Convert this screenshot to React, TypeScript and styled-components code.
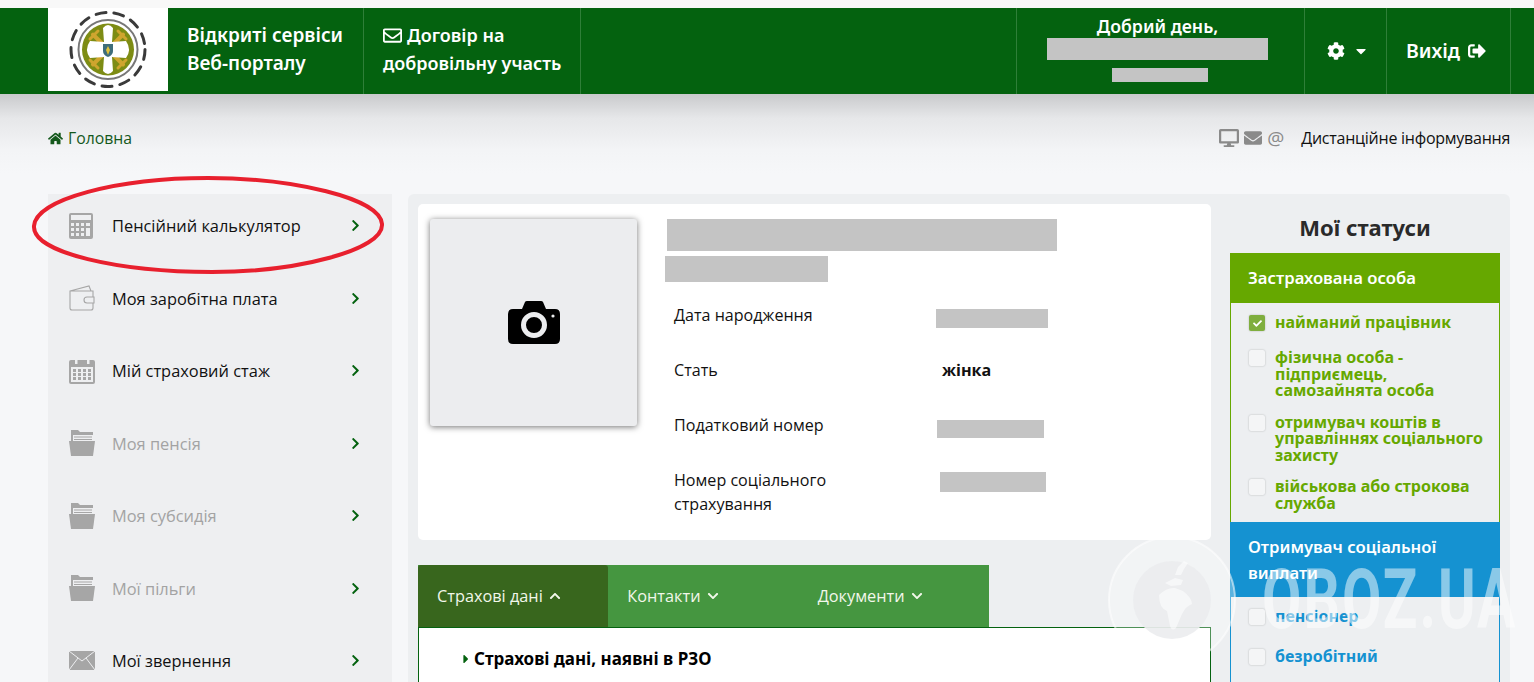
import React, { FC } from 'react'
import styled, { createGlobalStyle } from 'styled-components'
import {
  FaCaretDown,
  FaCaretRight,
  FaCheck,
  FaChevronDown,
  FaChevronRight,
  FaChevronUp,
  FaCog,
  FaDesktop,
  FaEnvelope,
  FaHome,
  FaRegEnvelope,
  FaSignOutAlt,
} from 'react-icons/fa'

const GREEN = '#04620f'
const STATUS_GREEN = '#66a800'
const STATUS_BLUE = '#1592d1'
const PANEL = '#edeff1'
const ICON_GREY = '#a6a6a6'

const GlobalStyle = createGlobalStyle`
  html, body { margin: 0; height: 682px; overflow: hidden; background: #f6f7f9; }
  body { font-family: "Open Sans", "Noto Sans", sans-serif; font-size: 16px; color: #111; }
  * { box-sizing: border-box; }
`

const Page = styled.div`
  position: relative;
  height: 682px;
  overflow: hidden;
  padding-top: 8px;
  background: #f8f8f8;
`

const Header = styled.header`
  display: flex;
  height: 86px;
  padding-left: 48px;
  background: ${GREEN};
  color: #fff;
  font-family: "Noto Sans", sans-serif;
  font-weight: 600;
  font-size: 18px;
  line-height: 28px;
`

const LogoBox = styled.div`
  display: flex;
  align-items: center;
  justify-content: center;
  width: 120px;
  height: 83px;
  background: #fff;
`

const Cell = styled.div<{ $w: number; $size?: number; $pad?: number }>`
  display: flex;
  flex-direction: column;
  justify-content: center;
  width: ${(p) => p.$w}px;
  padding: 0 0 4px ${(p) => p.$pad ?? 19}px;
  border-right: 1px solid #2f7f38;
  font-size: ${(p) => p.$size ?? 18}px;
  white-space: nowrap;
`

const CenterCell = styled(Cell)`
  align-items: center;
  padding: 0 0 0 ${(p) => p.$pad ?? 0}px;
`

const ExitCell = styled(CenterCell)`
  padding-right: 5px;
`

const HeaderSpacer = styled.div`
  flex: 1;
  border-right: 1px solid #2f7f38;
`

const HeaderEnd = styled.div`
  width: 23px;
`

const Row = styled.div<{ $gap?: number }>`
  display: flex;
  align-items: center;
  gap: ${(p) => p.$gap ?? 5}px;
  white-space: nowrap;
`

const Greeting = styled(CenterCell)`
  justify-content: flex-start;
  padding: 6px 6px 0 0;
  line-height: 24px;
`

const HeaderBlock = styled.div<{ $w: number; $h: number; $mt: number; $x?: number }>`
  width: ${(p) => p.$w}px;
  height: ${(p) => p.$h}px;
  margin-top: ${(p) => p.$mt}px;
  margin-left: ${(p) => p.$x ?? 0}px;
  background: #c4c4c4;
`

const Content = styled.div`
  height: 588px;
  padding: 0 24px 0 48px;
  background: linear-gradient(#c9cacc 0, #e6e7e9 24px, #f3f4f6 56px, #f6f7f9 80px);
`

const Crumbs = styled.div`
  display: flex;
  align-items: center;
  justify-content: space-between;
  height: 100px;
  padding-bottom: 12px;
`

const HomeLink = styled.a`
  display: flex;
  align-items: center;
  gap: 5px;
  color: #14581c;
  font-size: 15.8px;
`

const Remote = styled.div`
  display: flex;
  align-items: center;
  gap: 5px;
  color: #8a8a8a;
`

const RemoteAt = styled.span`
  font-size: 19px;
  line-height: 20px;
`

const RemoteLabel = styled.span`
  margin-left: 12px;
  color: #111;
  letter-spacing: -0.25px;
`

const Columns = styled.div`
  display: grid;
  grid-template-columns: 344px 1102px;
  gap: 16px;
`

const Sidebar = styled.nav`
  display: flex;
  flex-direction: column;
  gap: 8.5px;
  height: 560px;
  background: #eeeff1;
`

const SideItem = styled.a<{ $off?: boolean }>`
  display: grid;
  grid-template-columns: 24px 1fr 11px;
  align-items: center;
  column-gap: 19px;
  flex: 0 0 64px;
  padding: 0 31px 0.8px 21px;
  color: ${(p) => (p.$off ? '#a3a3a3' : '#111')};
  font-size: 16.4px;
`

const Arrow = styled(FaChevronRight)`
  width: 11px;
  height: 13px;
  color: ${GREEN};
`

const Panel = styled.main`
  display: grid;
  grid-template-columns: 793px 270px;
  column-gap: 19px;
  height: 560px;
  padding: 10px;
  background: ${PANEL};
  border-radius: 6px;
`

const Card = styled.section`
  display: grid;
  grid-template-columns: 207px 1fr;
  column-gap: 30px;
  height: 336px;
  padding: 15px 12px;
  background: #fff;
  border-radius: 5px;
`

const Photo = styled.div`
  display: flex;
  align-items: center;
  justify-content: center;
  height: 207px;
  background: #ecedef;
  border-radius: 3px;
  box-shadow: 0 1px 6px rgba(0, 0, 0, 0.55);
`

const Redacted = styled.div<{ $w: number; $h: number; $x?: number; $y?: number }>`
  width: ${(p) => p.$w}px;
  height: ${(p) => p.$h}px;
  margin: ${(p) => p.$y ?? 0}px 0 0 ${(p) => p.$x ?? 0}px;
  background: #c4c4c4;
`

const Person = styled.div`
  display: flex;
  flex-direction: column;
  gap: 5px;
`

const Facts = styled.dl`
  display: grid;
  grid-template-columns: 262px 1fr;
  grid-auto-rows: 55px;
  align-items: start;
  width: 420px;
  margin: 16px 0 0 7px;
  font-size: 16.1px;
  line-height: 24px;
`

const FactName = styled.dt`
  margin: 0;
`

const FactValue = styled.dd`
  margin: 0 0 0 6px;
  font-weight: 700;
`

const Tabs = styled.div`
  display: flex;
  width: 571px;
  height: 62px;
  margin-top: 25px;
  background: #459640;
`

const Tab = styled.div<{ $active?: boolean }>`
  display: flex;
  align-items: center;
  gap: 6px;
  width: 190.33px;
  padding-left: 19px;
  background: ${(p) => (p.$active ? '#38661d' : 'transparent')};
  border-radius: 3px 3px 0 0;
  color: #f2f7ea;
  font-size: 16.3px;
`

const TabChevron = styled.span`
  display: flex;
  font-size: 12px;
`

const TabBody = styled.div`
  height: 200px;
  padding: 18px 0 0 40px;
  background: #fff;
  border: 1px solid ${GREEN};
`

const DataTitle = styled.div`
  display: flex;
  align-items: center;
  gap: 2px;
  font-family: "Noto Sans", sans-serif;
  font-weight: 700;
  font-size: 17px;
  line-height: 26px;
  color: #000;
  svg { color: ${GREEN}; font-size: 14px; margin-right: -1px; }
`

const Statuses = styled.aside`
  display: flex;
  flex-direction: column;
`

const StatusesTitle = styled.h2`
  height: 49px;
  margin: 0;
  font-family: "Noto Sans", sans-serif;
  font-size: 22px;
  font-weight: 700;
  line-height: 47px;
  text-align: center;
  color: #2a2a2a;
`

const StatusHead = styled.div<{ $color: string }>`
  padding: 12px 18px 12px;
  background: ${(p) => p.$color};
  color: #fff;
  font-family: "Noto Sans", sans-serif;
  font-weight: 600;
  font-size: 16.7px;
  line-height: 26px;
`

const BlueHead = styled(StatusHead)`
  padding-bottom: 11px;
`

const StatusBody = styled.div<{ $color: string; $gap: number }>`
  display: flex;
  flex-direction: column;
  gap: ${(p) => p.$gap}px;
  padding: 11px 10px 11px 18px;
  border: solid ${(p) => p.$color};
  border-width: 0 1px;
  color: ${(p) => p.$color};
`

const BlueBody = styled(StatusBody)`
  flex: 1;
`

const StatusItem = styled.label<{ $extra?: boolean }>`
  display: grid;
  grid-template-columns: 16px 1fr;
  column-gap: 10px;
  margin-bottom: ${(p) => (p.$extra ? 3 : 0)}px;
  font-family: "Noto Sans", sans-serif;
  font-weight: 700;
  font-size: 16px;
  line-height: 16.5px;
`

const Check = styled.span<{ $on?: boolean }>`
  display: flex;
  align-items: center;
  justify-content: center;
  width: 16px;
  height: 16px;
  margin-top: 1px;
  border-radius: 2px;
  background: ${(p) => (p.$on ? '#7fae3e' : '#f4f5f6')};
  box-shadow: 0 0 2px rgba(0, 0, 0, 0.25);
  color: #fff;
  font-size: 9px;
`

const Ellipse = styled.svg`
  position: absolute;
  left: 28px;
  top: 173px;
  pointer-events: none;
`

const Watermark = styled.div`
  position: absolute;
  left: 1107px;
  top: 535px;
  display: flex;
  align-items: center;
  pointer-events: none;
  color: rgba(255, 255, 255, 0.5);
`

const WatermarkText = styled.span`
  margin-left: 25px;
  font-family: "Roboto", sans-serif;
  font-weight: 700;
  font-size: 84px;
  line-height: 130px;
  letter-spacing: 3px;
  transform: scaleX(0.68);
  transform-origin: left center;
  white-space: nowrap;
`

const Logo: FC = () => (
  <svg width="84" height="83" viewBox="0 0 84 83">
    <circle cx="42" cy="41.5" r="37" fill="none" stroke="#3a3a3a" strokeWidth="3" strokeLinecap="round" strokeDasharray="10 8" />
    <circle cx="42" cy="41.5" r="29.5" fill="#fff" stroke="#777" strokeWidth="2" />
    <circle cx="42" cy="41.5" r="26" fill="#7d8c14" />
    <g stroke="#cfa52e" strokeWidth="4" strokeLinecap="round">
      <path d="M27 26.500 57 56.500M57 26.500 27 56.500" />
      <path d="M24 31 32 23M52 23 60 31M24 52 32 60M52 60 60 52" strokeWidth="3" />
    </g>
    <path
      fill="#fff"
      d="M37 20q5-6 10 0l-1 14 14-1q6 8.500 0 17l-14-1 1 14q-5 6-10 0l1-14-14 1q-6-8.500 0-17l14 1z"
    />
    <path fill="#3f6d7a" d="M37 36h10v7q0 4-5 6-5-2-5-6z" />
    <path fill="#e0c13a" d="M42 38l2 4-2 5-2-5z" />
  </svg>
)

const CameraIcon: FC = () => (
  <svg width="52" height="43" viewBox="0 0 52 43">
    <path
      fill="#000"
      d="M14 8l3-7q.5-1 2-1h14q1.500 0 2 1l3 7h9q5 0 5 5v25q0 5-5 5H5q-5 0-5-5V13q0-5 5-5z"
    />
    <circle cx="26" cy="24" r="10.500" fill="#000" stroke="#ecedef" strokeWidth="5" />
    <circle cx="45" cy="15" r="1.600" fill="#ecedef" />
  </svg>
)

const CalcIcon: FC = () => (
  <svg width="24" height="26" viewBox="0 0 24 26">
    <rect width="24" height="26" rx="2" fill={ICON_GREY} />
    <rect x="2" y="2" width="20" height="5" fill="#eeeff1" />
    <g fill="#eeeff1">
      {[2, 7, 12].map((x) =>
        [10, 15, 20].map((y) => <rect key={`${x}-${y}`} x={x} y={y} width="3" height="3" />)
      )}
      <rect x="17" y="10" width="4" height="3" />
      <rect x="17" y="15" width="4" height="8" />
    </g>
  </svg>
)

const WalletIcon: FC = () => (
  <svg width="26" height="26" viewBox="0 0 26 26" fill="none" stroke={ICON_GREY} strokeWidth="1.1">
    <path d="M1 6 20 1l2 5M1 6v17q0 2 2 2h19q2 0 2-2V6z" />
    <path d="M25 12h-7q-3 0-3 3t3 3h7z" fill="#eeeff1" />
  </svg>
)

const CalendarIcon: FC = () => (
  <svg width="26" height="26" viewBox="0 0 26 26">
    <rect y="2" width="26" height="24" rx="2" fill={ICON_GREY} />
    <rect x="2" y="9" width="22" height="15" fill="#eeeff1" />
    <rect x="6" width="2.500" height="6" fill="#eeeff1" />
    <rect x="18" width="2.500" height="6" fill="#eeeff1" />
    <g fill={ICON_GREY}>
      {[4, 9, 14, 19].map((x) =>
        [11, 15, 19].map((y) => <rect key={`${x}-${y}`} x={x} y={y} width="3" height="3" />)
      )}
    </g>
  </svg>
)

const FolderIcon: FC = () => (
  <svg width="26" height="26" viewBox="0 0 26 26">
    <path fill={ICON_GREY} d="M2 0h7l2 2h13v10H2z" />
    <path fill="#eeeff1" d="M4 5h20v6H4z" />
    <path fill={ICON_GREY} d="M5 6.500h18v1H5zM5 9h18v1H5z" />
    <path fill={ICON_GREY} d="M0 11h26l-2 15H2z" />
  </svg>
)

const MailIcon: FC = () => (
  <svg width="26" height="19" viewBox="0 0 26 19">
    <rect width="26" height="19" rx="1" fill={ICON_GREY} />
    <path d="M0 0 13 10 26 0M0 19l9-12M26 19l-9-12" fill="none" stroke="#eeeff1" strokeWidth="1" />
  </svg>
)

const GlobeMark: FC = () => (
  <svg width="130" height="130" viewBox="0 0 130 130">
    <circle cx="65" cy="65" r="63" fill="rgba(255,255,255,0.3)" stroke="rgba(255,255,255,0.55)" strokeWidth="2" />
    <circle cx="65" cy="65" r="39" fill="rgba(235,236,238,0.9)" />
    <g fill="rgba(255,255,255,0.55)">
      <path d="M52 60q8-8 16-7l8 3q9 7 9 13-6 2-10 10l-6 14q-4 4-6-2l-3-15q-8-3-8-16z" />
      <path d="M58 48l10-5 8 2-2 5-10 1z" />
      <path d="M68 40l3-8 6-6 4 2-4 6-3 6z" />
    </g>
  </svg>
)

const menu = [
  { label: 'Пенсійний калькулятор', icon: <CalcIcon /> },
  { label: 'Моя заробітна плата', icon: <WalletIcon /> },
  { label: 'Мій страховий стаж', icon: <CalendarIcon /> },
  { label: 'Моя пенсія', icon: <FolderIcon />, off: true },
  { label: 'Моя субсидія', icon: <FolderIcon />, off: true },
  { label: 'Мої пільги', icon: <FolderIcon />, off: true },
  { label: 'Мої звернення', icon: <MailIcon /> },
]

const insured = [
  { label: 'найманий працівник', on: true },
  { label: 'фізична особа - підприємець, самозайнята особа' },
  { label: 'отримувач коштів в управліннях соціального захисту' },
  { label: 'військова або строкова служба' },
]

const App: FC = () => (
  <>
    <GlobalStyle />
    <Page>
      <Header>
        <LogoBox>
          <Logo />
        </LogoBox>
        <Cell $w={196} $size={19}>
          <div>Відкриті сервіси</div>
          <div>Веб-порталу</div>
        </Cell>
        <Cell $w={217}>
          <Row>
            <FaRegEnvelope size={19} />
            Договір на
          </Row>
          <div>добровільну участь</div>
        </Cell>
        <HeaderSpacer />
        <Greeting $w={288} $size={17.7}>
          <div>Добрий день,</div>
          <HeaderBlock $w={221} $h={22} $mt={0} />
          <HeaderBlock $w={96} $h={14} $mt={8} $x={5} />
        </Greeting>
        <CenterCell $w={82} $pad={5}>
          <Row $gap={8}>
            <FaCog size={18} />
            <FaCaretDown size={16} />
          </Row>
        </CenterCell>
        <ExitCell $w={124} $size={19.5}>
          <Row $gap={8}>
            Вихід
            <FaSignOutAlt size={18} />
          </Row>
        </ExitCell>
        <HeaderEnd />
      </Header>
      <Content>
        <Crumbs>
          <HomeLink>
            <FaHome size={15} />
            Головна
          </HomeLink>
          <Remote>
            <FaDesktop size={20} />
            <FaEnvelope size={18} />
            <RemoteAt>@</RemoteAt>
            <RemoteLabel>Дистанційне інформування</RemoteLabel>
          </Remote>
        </Crumbs>
        <Columns>
          <Sidebar>
            {menu.map((item) => (
              <SideItem key={item.label} $off={item.off}>
                {item.icon}
                <span>{item.label}</span>
                <Arrow />
              </SideItem>
            ))}
          </Sidebar>
          <Panel>
            <div>
              <Card>
                <Photo>
                  <CameraIcon />
                </Photo>
                <Person>
                  <Redacted $w={390} $h={32} />
                  <Redacted $w={163} $h={26} $x={-2} />
                  <Facts>
                    <FactName>Дата народження</FactName>
                    <Redacted $w={112} $h={19} $y={6} />
                    <FactName>Стать</FactName>
                    <FactValue>жінка</FactValue>
                    <FactName>Податковий номер</FactName>
                    <Redacted $w={107} $h={18} $x={1} $y={7} />
                    <FactName>
                      Номер соціального
                      <br />
                      страхування
                    </FactName>
                    <Redacted $w={106} $h={20} $x={4} $y={4} />
                  </Facts>
                </Person>
              </Card>
              <Tabs>
                <Tab $active>
                  Страхові дані
                  <TabChevron>
                    <FaChevronUp />
                  </TabChevron>
                </Tab>
                <Tab>
                  Контакти
                  <TabChevron>
                    <FaChevronDown />
                  </TabChevron>
                </Tab>
                <Tab>
                  Документи
                  <TabChevron>
                    <FaChevronDown />
                  </TabChevron>
                </Tab>
              </Tabs>
              <TabBody>
                <DataTitle>
                  <FaCaretRight />
                  Страхові дані, наявні в РЗО
                </DataTitle>
              </TabBody>
            </div>
            <Statuses>
              <StatusesTitle>Мої статуси</StatusesTitle>
              <StatusHead $color={STATUS_GREEN}>Застрахована особа</StatusHead>
              <StatusBody $color={STATUS_GREEN} $gap={15}>
                {insured.map((item) => (
                  <StatusItem key={item.label} $extra={item.on}>
                    <Check $on={item.on}>{item.on && <FaCheck />}</Check>
                    <span>{item.label}</span>
                  </StatusItem>
                ))}
              </StatusBody>
              <BlueHead $color={STATUS_BLUE}>Отримувач соціальної виплати</BlueHead>
              <BlueBody $color={STATUS_BLUE} $gap={23}>
                <StatusItem>
                  <Check />
                  <span>пенсіонер</span>
                </StatusItem>
                <StatusItem>
                  <Check />
                  <span>безробітний</span>
                </StatusItem>
              </BlueBody>
            </Statuses>
          </Panel>
        </Columns>
      </Content>
      <Ellipse width="360" height="104" viewBox="0 0 360 104">
        <path
          d="M6 53C8 26 90 5 180 5c85 0 172 20 174 46 2 26-85 48-170 48C92 99 4 80 6 53z"
          fill="none"
          stroke="#e8202e"
          strokeWidth="4"
        />
      </Ellipse>
      <Watermark>
        <GlobeMark />
        <WatermarkText>OBOZ.UA</WatermarkText>
      </Watermark>
    </Page>
  </>
)

export default App
